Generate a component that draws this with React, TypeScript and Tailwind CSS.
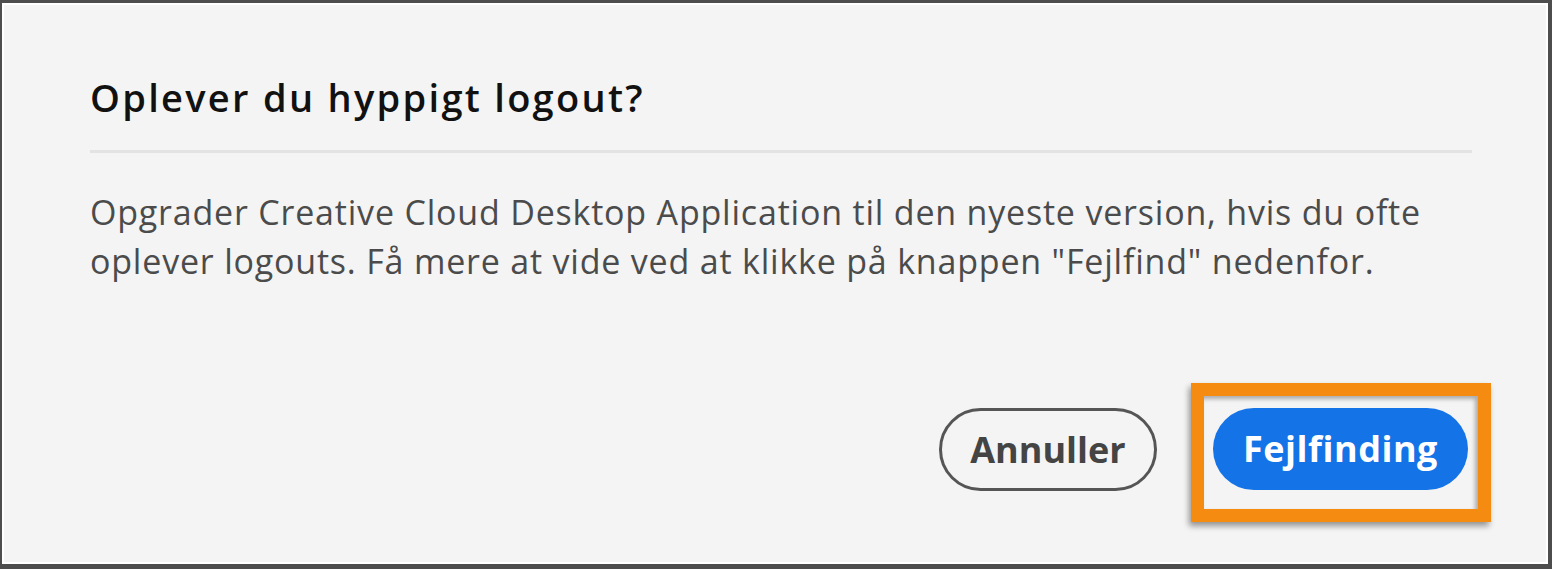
export default function App() {
  return (
    <div className="w-[1552px] h-[569px] border-t-[3px] border-l-[2px] border-r-[4px] border-b-[5px] border-[#4d4d4d] bg-[#4d4d4d]">
      <div
        className="h-full border-2 border-white bg-[#f4f4f4]"
        style={{ fontFamily: '"Open Sans", "Liberation Sans", sans-serif' }}
      >
        <div className="pl-[86px] pr-[74px] pt-[69px]">
          <h1 className="text-[38px] leading-[46px] font-semibold text-[#111] tracking-[2.3px]">
            Oplever du hyppigt logout?
          </h1>
          <div className="mt-[30px] h-[3px] bg-[#e3e3e3]" />
          <p className="mt-[35px] text-[34px] leading-[49px] text-[#4b4b4b] tracking-[0.8px] whitespace-nowrap">
            Opgrader Creative Cloud Desktop Application til den nyeste version, hvis du ofte
            <br />
            oplever logouts. Få mere at vide ved at klikke på knappen "Fejlfind" nedenfor.
          </p>
        </div>
        <div className="mt-[97px] flex items-start justify-end pr-[55px]">
          <button className="mt-[25px] h-[83px] w-[218px] rounded-full border-[3px] border-[#555] text-[36px] font-bold text-[#444]">
            Annuller
          </button>
          <div className="ml-[34px] border-[13px] border-[#f68b12] pl-[9px] pr-[10px] pt-[12px] pb-[19px] shadow-[-2px_4px_6px_rgba(0,0,0,0.4),inset_-3px_3px_4px_rgba(0,0,0,0.3)]">
            <button className="h-[82px] w-[255px] rounded-full bg-[#1473e6] text-[36px] font-bold text-white tracking-[0.5px]">
              Fejlfinding
            </button>
          </div>
        </div>
      </div>
    </div>
  );
}
